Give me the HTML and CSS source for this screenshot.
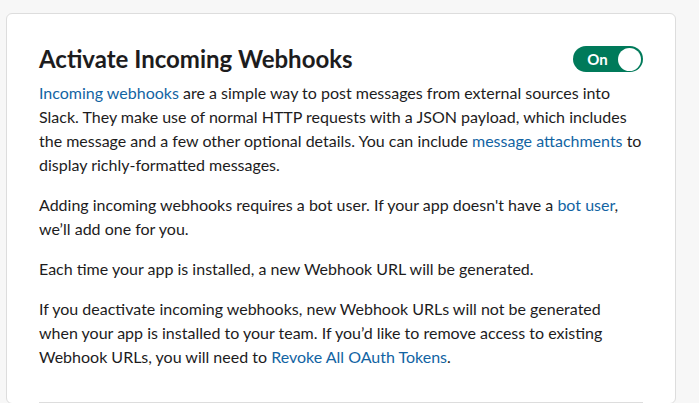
FILE: index.html
```html
<!DOCTYPE html>
<html>
<head>
<meta charset="utf-8">
<link rel="stylesheet" href="styles.css">
</head>
<body>
<div class="card">
  <div class="header">
    <h2 class="title">Activate Incoming Webhooks</h2>
    <div class="toggle"><span class="toggle-label">On</span><span class="knob"></span></div>
  </div>
  <p><a href="#">Incoming webhooks</a> are a simple way to post messages from external sources into Slack. They make use of normal HTTP requests with a JSON payload, which includes the message and a few other optional details. You can include <a href="#">message attachments</a> to display richly-formatted messages.</p>
  <p>Adding incoming webhooks requires a bot user. If your app doesn't have a <a href="#">bot user</a>, we’ll add one for you.</p>
  <p>Each time your app is installed, a new Webhook URL will be generated.</p>
  <p>If you deactivate incoming webhooks, new Webhook URLs will not be generated when your app is installed to your team. If you’d like to remove access to existing Webhook URLs, you will need to <a href="#">Revoke All OAuth Tokens</a>.</p>
  <div class="divider"></div>
</div>
</body>
</html>
```
FILE: styles.css
```css
html, body {
  margin: 0;
  padding: 0;
  background: #f7f7f7;
  font-family: Lato, "Liberation Sans", sans-serif;
  color: #1d1c1d;
}
.card {
  margin: 13px 0 0 6px;
  width: 670px;
  box-sizing: border-box;
  background: #fff;
  border: 1px solid #dddddd;
  border-radius: 6px;
  padding: 31px 32px 0 32px;
}
.header {
  display: flex;
  align-items: center;
  justify-content: space-between;
  height: 28px;
  margin-bottom: 8px;
}
.title {
  margin: 0;
  font-size: 24px;
  line-height: 28px;
  font-weight: 700;
}
.toggle {
  width: 70px;
  height: 26px;
  border-radius: 13px;
  background: #007a5a;
  display: flex;
  align-items: center;
  box-sizing: border-box;
  padding: 0 2px 0 0;
}
.toggle-label {
  flex: 1;
  text-align: center;
  color: #fff;
  font-weight: 700;
  font-size: 15px;
  line-height: 26px;
  padding-left: 4px;
}
.knob {
  width: 23px;
  height: 23px;
  border-radius: 50%;
  background: #fff;
}
p {
  margin: 0 0 16px 0;
  font-size: 16px;
  line-height: 24px;
}
a {
  color: #1264a3;
  text-decoration: none;
}
.divider {
  margin-top: 33px;
  height: 1px;
  background: #dddddd;
}
```
